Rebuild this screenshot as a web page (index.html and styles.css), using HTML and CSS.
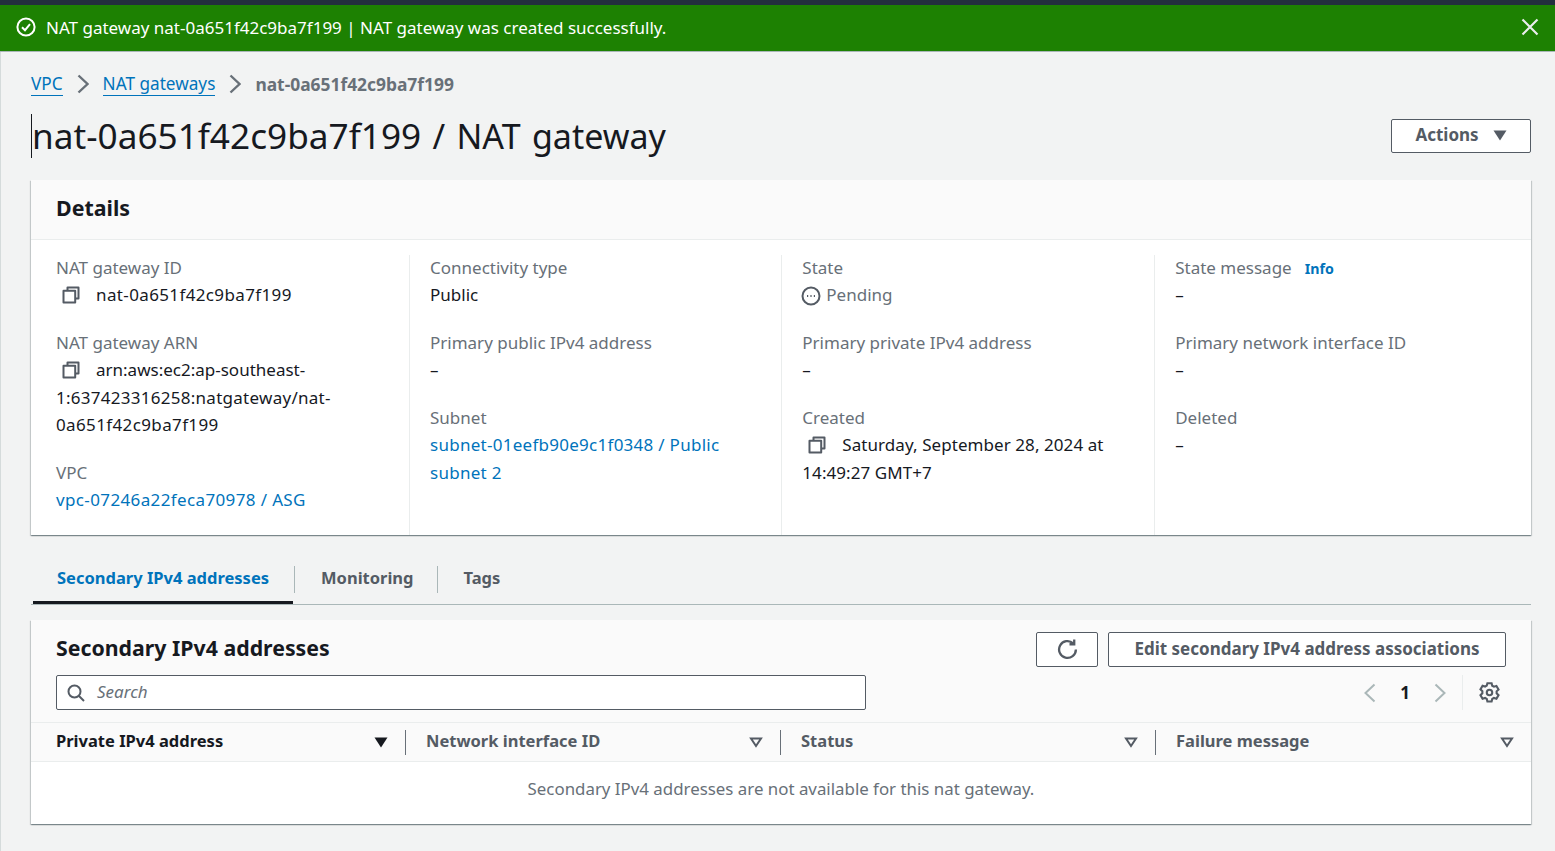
FILE: index.html
```html
<!DOCTYPE html>
<html lang="en">
<head>
<meta charset="utf-8">
<title>NAT gateway</title>
<link rel="stylesheet" href="styles.css">
</head>
<body>
<div class="topbar"></div>
<div class="flash">
  <svg class="flash-icon" viewBox="0 0 20 20"><circle cx="10" cy="10" r="8.600"/><path d="M6 10.200l3 3 5-6"/></svg>
  <span class="flash-text">NAT gateway nat-0a651f42c9ba7f199 | NAT gateway was created successfully.</span>
  <svg class="flash-close" viewBox="0 0 18 18"><path d="M1.500 1.500l15 15M16.500 1.500l-15 15"/></svg>
</div>
<main class="main">
  <nav class="crumbs">
    <a class="crumb-link" href="#">VPC</a>
    <svg class="crumb-sep" viewBox="0 0 12 20"><path d="M1.500 1.500l9 8.500-9 8.500"/></svg>
    <a class="crumb-link" href="#">NAT gateways</a>
    <svg class="crumb-sep" viewBox="0 0 12 20"><path d="M1.500 1.500l9 8.500-9 8.500"/></svg>
    <span class="crumb-current">nat-0a651f42c9ba7f199</span>
  </nav>
  <header class="page-head">
    <h1 class="page-title">nat-0a651f42c9ba7f199<span class="title-rest"> / NAT gateway</span></h1>
    <button class="btn btn-actions"><span class="btn-label">Actions</span><svg class="caret" viewBox="0 0 14 11"><path d="M0.500 0.500h13L7 10.500z"/></svg></button>
  </header>
  <section class="card details">
    <div class="details-head"><h2 class="details-title">Details</h2></div>
    <div class="details-grid">
      <div class="col">
        <div class="kv"><div class="k">NAT gateway ID</div><div class="v id"><svg class="copy" viewBox="0 0 18 18"><path d="M5.500 4V1.500h11v11H14"/><rect x="1.500" y="4.800" width="11.700" height="11.700"/></svg>nat-0a651f42c9ba7f199</div></div>
        <div class="kv"><div class="k">NAT gateway ARN</div><div class="v"><svg class="copy" viewBox="0 0 18 18"><path d="M5.500 4V1.500h11v11H14"/><rect x="1.500" y="4.800" width="11.700" height="11.700"/></svg>arn:aws:ec2:ap-southeast-<span class="id-soft">1:637423316258:natgateway/nat-</span><span class="id">0a651f42c9ba7f199</span></div></div>
        <div class="kv"><div class="k">VPC</div><div class="v id"><a class="link" href="#">vpc-07246a22feca70978 / ASG</a></div></div>
      </div>
      <div class="col">
        <div class="kv"><div class="k">Connectivity type</div><div class="v">Public</div></div>
        <div class="kv"><div class="k">Primary public IPv4 address</div><div class="v">–</div></div>
        <div class="kv"><div class="k">Subnet</div><div class="v id-soft"><a class="link" href="#">subnet-01eefb90e9c1f0348 / Public subnet 2</a></div></div>
      </div>
      <div class="col">
        <div class="kv"><div class="k">State</div><div class="v pending"><svg class="pending-icon" viewBox="0 0 20 20"><circle cx="10" cy="10" r="8.500"/><path d="M6 10h1.200M9.400 10h1.200M12.800 10h1.200"/></svg>Pending</div></div>
        <div class="kv"><div class="k">Primary private IPv4 address</div><div class="v">–</div></div>
        <div class="kv"><div class="k">Created</div><div class="v id-date"><svg class="copy" viewBox="0 0 18 18"><path d="M5.500 4V1.500h11v11H14"/><rect x="1.500" y="4.800" width="11.700" height="11.700"/></svg>Saturday, September 28, 2024 at 14:49:27 GMT+7</div></div>
      </div>
      <div class="col">
        <div class="kv"><div class="k">State message<a class="info" href="#">Info</a></div><div class="v">–</div></div>
        <div class="kv"><div class="k">Primary network interface ID</div><div class="v">–</div></div>
        <div class="kv"><div class="k">Deleted</div><div class="v">–</div></div>
      </div>
    </div>
  </section>
  <div class="tabs">
    <div class="tab tab-active"><span class="tab-label">Secondary IPv4 addresses</span></div>
    <div class="tab tab-mid"><span class="tab-label">Monitoring</span></div>
    <div class="tab"><span class="tab-label">Tags</span></div>
  </div>
  <section class="card table-card">
    <div class="table-head">
      <div class="table-head-left">
        <h2 class="table-title">Secondary IPv4 addresses</h2>
        <div class="search">
          <svg class="search-icon" viewBox="0 0 18 18"><circle cx="7.500" cy="7.500" r="6"/><path d="M12 12l5 5"/></svg>
          <span class="search-ph">Search</span>
        </div>
      </div>
      <div class="table-head-right">
        <div class="table-actions">
          <button class="btn btn-refresh"><svg class="refresh" viewBox="0 0 20 20"><path d="M18 10a8 8 0 1 1-2.600-5.900M16.400 0.500v4.500h-4.500"/></svg></button>
          <button class="btn btn-edit"><span class="btn-label">Edit secondary IPv4 address associations</span></button>
        </div>
        <div class="pager">
          <svg class="pager-arrow" viewBox="0 0 12 20"><path d="M10.500 1.500L1.500 10l9 8.500"/></svg>
          <span class="page-num">1</span>
          <svg class="pager-arrow" viewBox="0 0 12 20"><path d="M1.500 1.500l9 8.500-9 8.500"/></svg>
          <span class="pager-sep"></span>
          <svg class="gear" viewBox="0 0 20 20"><circle cx="10" cy="10" r="2.600"/><path d="M8 1.200h4l.6 2.400 1.600.9 2.400-.7 2 3.400-1.800 1.700v1.900l1.800 1.700-2 3.400-2.400-.7-1.600.9-.6 2.400H8l-.6-2.400-1.600-.9-2.400.7-2-3.400 1.800-1.700V8.700L1.400 7l2-3.400 2.400.7 1.600-.9z"/></svg>
        </div>
      </div>
    </div>
    <div class="thead">
      <div class="th th-sorted"><span class="th-label">Private IPv4 address</span><svg class="sort" viewBox="0 0 14 11"><path d="M0.500 0.500h13L7 10.500z"/></svg></div>
      <div class="th"><span class="th-label">Network interface ID</span><svg class="sort" viewBox="0 0 14 11"><path d="M2 1.500h10L7 9z"/></svg></div>
      <div class="th"><span class="th-label">Status</span><svg class="sort" viewBox="0 0 14 11"><path d="M2 1.500h10L7 9z"/></svg></div>
      <div class="th"><span class="th-label">Failure message</span><svg class="sort" viewBox="0 0 14 11"><path d="M2 1.500h10L7 9z"/></svg></div>
    </div>
    <div class="empty">Secondary IPv4 addresses are not available for this nat gateway.</div>
  </section>
</main>
</body>
</html>
```
FILE: styles.css
```css
* { box-sizing: border-box; }
html, body { margin: 0; height: 100%; }
body { height: 851px; overflow: hidden; background: #f2f3f3; color: #16191f; font-family: "Noto Sans", sans-serif; font-size: 17px; }
h1, h2 { margin: 0; }
a { text-decoration: none; }

.topbar { height: 5px; background: #232f3e; }
.flash { height: 47px; background: #1d8102; border-bottom: 1px solid #aab7b8; display: flex; align-items: center; padding: 0 16px 2px; color: #fff; font-size: 17px; }
.flash-icon { width: 20px; height: 20px; margin-right: 10px; fill: none; stroke: #fff; stroke-width: 2; }
.flash-text { flex: 1; }
.flash-close { width: 18px; height: 18px; fill: none; stroke: #eaeded; stroke-width: 2.200; }

.main { border-left: 1px solid #d5dbdb; padding: 20px 24px 0 30px; height: 799px; }

.crumbs { display: flex; align-items: center; height: 24px; font-size: 17px; }
.crumb-link { color: #0073bb; border-bottom: 1px solid #0073bb; line-height: 23px; font-size: 17.200px; }
.crumb-sep { width: 12px; height: 20px; margin: 0 14px; fill: none; stroke: #687078; stroke-width: 2.400; }
.crumb-current { color: #687078; font-weight: 700; font-size: 17.400px; }

.page-head { display: flex; align-items: center; justify-content: space-between; height: 44px; margin-top: 18px; }
.page-title { font-size: 35.200px; font-weight: 400; line-height: 42px; height: 44px; border-left: 1px solid #16191f; }
.title-rest { font-size: 34px; word-spacing: 2.500px; }

.btn { background: #fff; border: 1px solid #545b64; border-radius: 2px; color: #545b64; font: inherit; font-weight: 700; }
.btn-label { position: relative; top: -1px; }
.btn-actions { width: 140px; height: 34px; display: flex; align-items: center; justify-content: center; gap: 14px; padding: 0 0 1px; }
.caret { width: 14px; height: 11px; fill: #545b64; }

.card { background: #fff; box-shadow: 0 1px 1px 0 rgba(0,28,36,.3), 1px 1px 1px 0 rgba(0,28,36,.15), -1px 1px 1px 0 rgba(0,28,36,.15); }
.details { margin-top: 22px; height: 355px; }
.details-head { height: 60px; background: #fafafa; border-bottom: 1px solid #eaeded; padding: 0 25px 5px; display: flex; align-items: center; }
.details-title { font-size: 21.400px; font-weight: 700; }
.details-grid { display: grid; grid-template-columns: 378px 372.300px 372.900px 1fr; padding: 15px 0 20px; height: 295px; }
.col { padding: 0 20px; border-left: 1px solid #eaeded; }
.col:first-child { border-left: none; padding: 0 25px; }
.kv { margin-bottom: 20.500px; line-height: 27.500px; position: relative; top: -1px; }
.k { color: #687078; line-height: 27px; }
.v { color: #16191f; }
.id { letter-spacing: .37px; }
.id-soft { letter-spacing: .27px; }
.id-date { letter-spacing: .07px; }
.copy { width: 18px; height: 18px; margin: 0 16px 0 6px; vertical-align: -3px; fill: none; stroke: #545b64; stroke-width: 2; stroke-linejoin: round; }
.link { color: #0073bb; }
.pending { color: #687078; }
.pending-icon { width: 20px; height: 20px; margin: 0 5px 0 -1px; vertical-align: -5px; fill: none; stroke: #545b64; stroke-width: 2; }
.info { color: #0073bb; font-weight: 700; font-size: 14.200px; line-height: 1; margin-left: 13px; }

.tabs { display: flex; height: 70px; padding: 31px 0 0 2px; border-bottom: 1px solid #aab7b8; font-weight: 700; font-size: 16.500px; color: #545b64; }
.tab { height: 38px; }
.tab-active { color: #0073bb; border-bottom: 3px solid #16191f; margin-right: 1px; }
.tab-label { height: 27px; padding: 0 25px 4px 24px; display: flex; align-items: center; }
.tab-active .tab-label { padding-right: 24px; }
.tab-mid .tab-label { padding-right: 23px; }
.tab + .tab .tab-label { border-left: 1px solid #aab7b8; padding-left: 26px; }
.table-card { margin-top: 15px; height: 204px; }
.table-head { background: #fafafa; height: 103px; display: flex; justify-content: space-between; padding: 12px 25px 0; border-bottom: 1px solid #eaeded; }
.table-head-left { width: 810px; }
.table-title { font-size: 21.300px; font-weight: 700; line-height: 31px; }
.search { margin-top: 12px; height: 35px; background: #fff; border: 1px solid #545b64; border-radius: 2px; display: flex; align-items: center; padding-left: 10px; }
.search-icon { width: 18px; height: 18px; margin-right: 12px; fill: none; stroke: #545b64; stroke-width: 2; }
.search-ph { color: #687078; font-style: italic; padding-bottom: 2px; }
.table-head-right { display: flex; flex-direction: column; align-items: flex-end; }
.table-actions { display: flex; gap: 10px; }
.btn-refresh { width: 62px; height: 35px; display: flex; align-items: center; justify-content: center; padding: 0; }
.refresh { width: 21px; height: 21px; fill: none; stroke: #545b64; stroke-width: 2.200; }
.btn-edit { width: 398px; height: 35px; padding: 0; }
.pager { margin-top: 8px; display: flex; align-items: center; height: 35px; }
.pager-arrow { width: 12px; height: 20px; fill: none; stroke: #aab7b8; stroke-width: 2; }
.page-num { width: 58px; text-align: center; font-weight: 700; }
.pager-sep { width: 1px; height: 35px; background: #eaeded; margin: 0 16px; }
.gear { width: 21px; height: 21px; fill: none; stroke: #545b64; stroke-width: 2; margin-right: 6px; }
.thead { display: grid; grid-template-columns: 374px 375px 375px 1fr; height: 39px; background: #fafafa; border-bottom: 1px solid #eaeded; align-items: center; }
.th { height: 25px; display: flex; align-items: center; justify-content: space-between; padding: 0 17px 0 20px; border-left: 1px solid #687078; color: #545b64; font-weight: 700; font-size: 16.500px; }
.th-label { padding-bottom: 4px; }
.th-sorted { border-left: none; padding-left: 25px; color: #16191f; }
.sort { width: 14px; height: 11px; fill: #16191f; }
.th:not(.th-sorted) .sort { fill: none; stroke: #545b64; stroke-width: 2; }
.empty { height: 62px; display: flex; align-items: center; justify-content: center; color: #687078; font-size: 16.870px; padding-bottom: 10px; }
```
